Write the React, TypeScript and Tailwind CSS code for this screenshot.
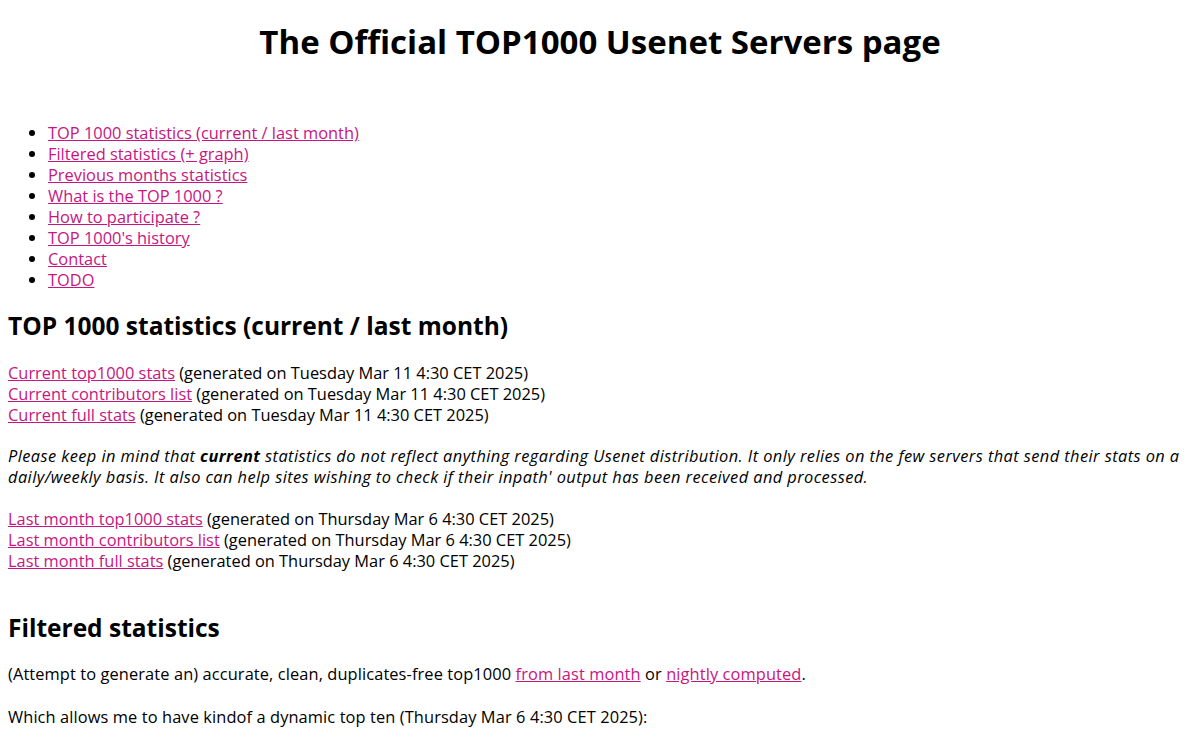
import React from 'react';

const link = 'text-[#c8157f] underline';

const menu = [
  'TOP 1000 statistics (current / last month)',
  'Filtered statistics (+ graph)',
  'Previous months statistics',
  'What is the TOP 1000 ?',
  'How to participate ?',
  "TOP 1000's history",
  'Contact',
  'TODO',
];

const current = [
  ['Current top1000 stats', 'Tuesday Mar 11 4:30 CET 2025'],
  ['Current contributors list', 'Tuesday Mar 11 4:30 CET 2025'],
  ['Current full stats', 'Tuesday Mar 11 4:30 CET 2025'],
];

const lastMonth = [
  ['Last month top1000 stats', 'Thursday Mar 6 4:30 CET 2025'],
  ['Last month contributors list', 'Thursday Mar 6 4:30 CET 2025'],
  ['Last month full stats', 'Thursday Mar 6 4:30 CET 2025'],
];

export default function App() {
  return (
    <div className="min-h-[740px] bg-white px-2 pt-[22px] text-black font-['Open_Sans','Noto_Sans',sans-serif] text-[16.4px] leading-[21px]">
      <h1 className="text-center text-[33px] leading-[40px] font-bold">The Official TOP1000 Usenet Servers page</h1>

      {/* Menu */}
      <ul className="mt-[60px] list-disc pl-10">
        {menu.map((m) => (
          <li key={m}>
            <a href="#" className={link}>{m}</a>
          </li>
        ))}
      </ul>

      <h2 className="mt-[20px] text-[24.5px] leading-[32px] font-bold">TOP 1000 statistics (current / last month)</h2>

      <div className="mt-[20px]">
        {current.map(([label, date]) => (
          <div key={label}>
            <a href="#" className={link}>{label}</a> (generated on {date})
          </div>
        ))}
      </div>

      <p className="mt-[20px] italic tracking-[0.42px]">
        Please keep in mind that <b>current</b> statistics do not reflect anything regarding Usenet distribution. It only relies on the few servers that send their stats on a daily/weekly basis. It also can help sites wishing to check if their inpath' output has been received and processed.
      </p>

      <div className="mt-[21px]">
        {lastMonth.map(([label, date]) => (
          <div key={label}>
            <a href="#" className={link}>{label}</a> (generated on {date})
          </div>
        ))}
      </div>

      <h2 className="mt-[41px] text-[24.5px] leading-[32px] font-bold">Filtered statistics</h2>

      <div className="tracking-[0.1px]">
        <p className="mt-[19px]">
          (Attempt to generate an) accurate, clean, duplicates-free top1000 <a href="#" className={link}>from last month</a> or{' '}
          <a href="#" className={link}>nightly computed</a>.
        </p>

        <p className="mt-[22px]">Which allows me to have kindof a dynamic top ten (Thursday Mar 6 4:30 CET 2025):</p>
      </div>
    </div>
  );
}
